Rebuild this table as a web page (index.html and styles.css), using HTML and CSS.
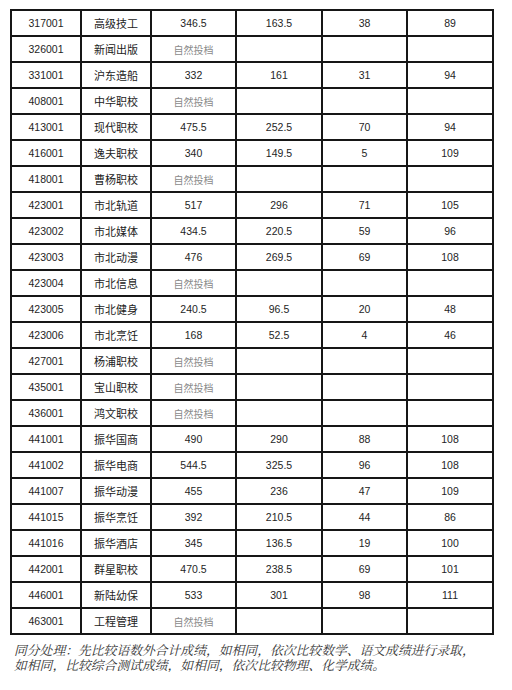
FILE: index.html
```html
<!DOCTYPE html>
<html lang="zh">
<head>
<meta charset="utf-8">
<title>录取分数</title>
<link rel="stylesheet" href="styles.css">
</head>
<body>
<div class="page">
<table class="scores">
<colgroup>
<col class="c1"><col class="c2"><col class="c3"><col class="c4"><col class="c5"><col class="c6">
</colgroup>
<tbody>
<tr><td class="code">317001</td><td class="name">高级技工</td><td>346.5</td><td>163.5</td><td>38</td><td>89</td></tr>
<tr><td class="code">326001</td><td class="name">新闻出版</td><td class="auto">自然投档</td><td></td><td></td><td></td></tr>
<tr><td class="code">331001</td><td class="name">沪东造船</td><td>332</td><td>161</td><td>31</td><td>94</td></tr>
<tr><td class="code">408001</td><td class="name">中华职校</td><td class="auto">自然投档</td><td></td><td></td><td></td></tr>
<tr><td class="code">413001</td><td class="name">现代职校</td><td>475.5</td><td>252.5</td><td>70</td><td>94</td></tr>
<tr><td class="code">416001</td><td class="name">逸夫职校</td><td>340</td><td>149.5</td><td>5</td><td>109</td></tr>
<tr><td class="code">418001</td><td class="name">曹杨职校</td><td class="auto">自然投档</td><td></td><td></td><td></td></tr>
<tr><td class="code">423001</td><td class="name">市北轨道</td><td>517</td><td>296</td><td>71</td><td>105</td></tr>
<tr><td class="code">423002</td><td class="name">市北媒体</td><td>434.5</td><td>220.5</td><td>59</td><td>96</td></tr>
<tr><td class="code">423003</td><td class="name">市北动漫</td><td>476</td><td>269.5</td><td>69</td><td>108</td></tr>
<tr><td class="code">423004</td><td class="name">市北信息</td><td class="auto">自然投档</td><td></td><td></td><td></td></tr>
<tr><td class="code">423005</td><td class="name">市北健身</td><td>240.5</td><td>96.5</td><td>20</td><td>48</td></tr>
<tr><td class="code">423006</td><td class="name">市北烹饪</td><td>168</td><td>52.5</td><td>4</td><td>46</td></tr>
<tr><td class="code">427001</td><td class="name">杨浦职校</td><td class="auto">自然投档</td><td></td><td></td><td></td></tr>
<tr><td class="code">435001</td><td class="name">宝山职校</td><td class="auto">自然投档</td><td></td><td></td><td></td></tr>
<tr><td class="code">436001</td><td class="name">鸿文职校</td><td class="auto">自然投档</td><td></td><td></td><td></td></tr>
<tr><td class="code">441001</td><td class="name">振华国商</td><td>490</td><td>290</td><td>88</td><td>108</td></tr>
<tr><td class="code">441002</td><td class="name">振华电商</td><td>544.5</td><td>325.5</td><td>96</td><td>108</td></tr>
<tr><td class="code">441007</td><td class="name">振华动漫</td><td>455</td><td>236</td><td>47</td><td>109</td></tr>
<tr><td class="code">441015</td><td class="name">振华烹饪</td><td>392</td><td>210.5</td><td>44</td><td>86</td></tr>
<tr><td class="code">441016</td><td class="name">振华酒店</td><td>345</td><td>136.5</td><td>19</td><td>100</td></tr>
<tr><td class="code">442001</td><td class="name">群星职校</td><td>470.5</td><td>238.5</td><td>69</td><td>101</td></tr>
<tr><td class="code">446001</td><td class="name">新陆幼保</td><td>533</td><td>301</td><td>98</td><td>111</td></tr>
<tr><td class="code">463001</td><td class="name">工程管理</td><td class="auto">自然投档</td><td></td><td></td><td></td></tr>
</tbody>
</table>
<p class="note">同分处理：先比较语数外合计成绩，如相同，依次比较数学、语文成绩进行录取，<br>如相同，比较综合测试成绩，如相同，依次比较物理、化学成绩。</p>
</div>
</body>
</html>
```
FILE: styles.css
```css
html, body {
  margin: 0;
  padding: 0;
  background: #ffffff;
}

.page {
  padding: 9px 0 0 10px;
  font-family: "Liberation Sans", Arial, "Noto Sans CJK SC", sans-serif;
  color: #1e1e1e;
}

.scores {
  border-collapse: collapse;
  table-layout: fixed;
  width: 484px;
}

.c1 { width: 70px; }
.c2 { width: 70px; }
.c3 { width: 85px; }
.c4 { width: 86px; }
.c5 { width: 85px; }
.c6 { width: 86px; }

.scores td {
  border: 2px solid #161616;
  height: 24px;
  padding: 0;
  text-align: center;
  vertical-align: middle;
  font-size: 10.5px;
  line-height: 12px;
  overflow: hidden;
}

.scores td.name {
  font-family: "Noto Sans CJK SC", sans-serif;
  font-size: 11px;
  color: #222;
}

.scores td.auto {
  font-family: "Noto Sans CJK SC", sans-serif;
  font-size: 10px;
  color: #8a8a8a;
  height: 22px;
  padding-top: 2px;
}

.note {
  margin: 7px 0 0 4px;
  font-family: "Noto Serif CJK SC", "Noto Sans CJK SC", serif;
  font-style: italic;
  font-size: 12.8px;
  line-height: 15px;
  color: #333;
  white-space: nowrap;
}
```
